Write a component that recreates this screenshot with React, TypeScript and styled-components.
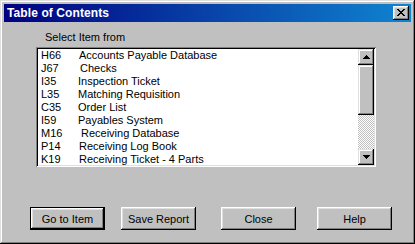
import React from "react";
import styled, { createGlobalStyle } from "styled-components";

const Global = createGlobalStyle`
  html, body { margin: 0; padding: 0; background: #c0c0c0; }
  body { font-family: "Liberation Sans", Arial, sans-serif; }
`;

const Window = styled.div`
  box-sizing: border-box;
  width: 415px;
  height: 244px;
  background: #c0c0c0;
  padding: 4px 4px 4px 4px;
  box-shadow: inset -1px -1px #000, inset 1px 1px #dfdfdf, inset -2px -2px #808080, inset 2px 2px #fff;
  display: flex;
  flex-direction: column;
`;

const TitleBar = styled.div`
  height: 18px;
  display: flex;
  align-items: center;
  justify-content: space-between;
  padding: 0 2px 0 3px;
  background: linear-gradient(90deg, #000080 0%, #1084d0 100%);
`;

const Title = styled.span`
  color: #fff;
  font-weight: bold;
  font-size: 12px;
  letter-spacing: 0.1px;
`;

const CloseBox = styled.div`
  box-sizing: border-box;
  width: 16px;
  height: 14px;
  background: #c0c0c0;
  box-shadow: inset -1px -1px #000, inset 1px 1px #fff, inset -2px -2px #808080, inset 2px 2px #dfdfdf;
  display: flex;
  align-items: center;
  justify-content: center;
  padding: 0 1px 1px 0;
`;

const Body = styled.div`
  flex: 1;
  display: flex;
  flex-direction: column;
  padding: 9px 0 0 32px;
`;

const Label = styled.div`
  font-size: 11px;
  line-height: 13px;
  color: #000;
  padding-left: 9px;
`;

const ListBox = styled.div`
  box-sizing: border-box;
  margin-top: 3px;
  width: 340px;
  height: 120px;
  padding: 2px;
  background: #fff;
  box-shadow: inset 1px 1px #808080, inset -1px -1px #fff, inset 2px 2px #000, inset -2px -2px #dfdfdf;
  display: flex;
`;

const Items = styled.div`
  flex: 1;
  padding-left: 3px;
  display: flex;
  flex-direction: column;
`;

const Row = styled.div`
  display: grid;
  grid-template-columns: 37px 1fr;
  height: 13px;
  font-size: 11px;
  line-height: 13px;
  color: #000;
`;

const Name = styled.span<{ $indent: number }>`
  padding-left: ${(p) => p.$indent}px;
`;

const ScrollBar = styled.div`
  width: 16px;
  display: flex;
  flex-direction: column;
`;

const Bevel = styled.div<{ $h: number }>`
  box-sizing: border-box;
  height: ${(p) => p.$h}px;
  background: #c0c0c0;
  box-shadow: inset -1px -1px #000, inset 1px 1px #dfdfdf, inset -2px -2px #808080, inset 2px 2px #fff;
  display: flex;
  align-items: center;
  justify-content: center;
`;

const Track = styled.div`
  flex: 1;
  background: repeating-conic-gradient(#c0c0c0 0% 25%, #fff 0% 50%) 0 0 / 2px 2px;
`;

const ButtonRow = styled.div`
  display: flex;
  margin-top: 40px;
  margin-left: -6px;
`;

const Button = styled.button<{ $ml: number; $default?: boolean }>`
  box-sizing: border-box;
  width: 75px;
  height: 23px;
  margin: 0 0 0 ${(p) => p.$ml}px;
  padding: 0;
  font-family: "Liberation Sans", Arial, sans-serif;
  font-size: 11px;
  color: #000;
  background: #c0c0c0;
  border: ${(p) => (p.$default ? "1px solid #000" : "none")};
  box-shadow: inset -1px -1px #000, inset 1px 1px #fff, inset -2px -2px #808080, inset 2px 2px #dfdfdf;
`;

const items: [string, string, number][] = [
  ["H66", "Accounts Payable Database", 1],
  ["J67", "Checks", 2],
  ["I35", "Inspection Ticket", 0],
  ["L35", "Matching Requisition", 0],
  ["C35", "Order List", 0],
  ["I59", "Payables System", 0],
  ["M16", "Receiving Database", 3],
  ["P14", "Receiving Log Book", 1],
  ["K19", "Receiving Ticket - 4 Parts", 1],
];

export default function App() {
  return (
    <>
      <Global />
      <Window>
        <TitleBar>
          <Title>Table of Contents</Title>
          <CloseBox>
            <svg width="8" height="7" viewBox="0 0 8 7" shapeRendering="crispEdges">
              <path d="M0 0h2v1h-2zM6 0h2v1h-2zM1 1h2v1h-2zM5 1h2v1h-2zM2 2h4v1h-4zM3 3h2v1h-2zM2 4h4v1h-4zM1 5h2v1h-2zM5 5h2v1h-2zM0 6h2v1h-2zM6 6h2v1h-2z" fill="#000" />
            </svg>
          </CloseBox>
        </TitleBar>
        <Body>
          <Label>Select Item from</Label>
          <ListBox>
            <Items>
              {items.map(([c, n, i]) => (
                <Row key={c}>
                  <span>{c}</span>
                  <Name $indent={i}>{n}</Name>
                </Row>
              ))}
            </Items>
            <ScrollBar>
              <Bevel $h={16}>
                <svg width="7" height="4" viewBox="0 0 7 4" shapeRendering="crispEdges">
                  <path d="M3 0h1v1h1v1h1v1h1v1h-7v-1h1v-1h1v-1h1z" fill="#000" />
                </svg>
              </Bevel>
              <Bevel $h={50} />
              <Track />
              <Bevel $h={16}>
                <svg width="7" height="4" viewBox="0 0 7 4" shapeRendering="crispEdges">
                  <path d="M0 0h7v1h-1v1h-1v1h-1v1h-1v-1h-1v-1h-1v-1h-1z" fill="#000" />
                </svg>
              </Bevel>
            </ScrollBar>
          </ListBox>
          <ButtonRow>
            <Button $ml={0} $default>Go to Item</Button>
            <Button $ml={16}>Save Report</Button>
            <Button $ml={25}>Close</Button>
            <Button $ml={21}>Help</Button>
          </ButtonRow>
        </Body>
      </Window>
    </>
  );
}
